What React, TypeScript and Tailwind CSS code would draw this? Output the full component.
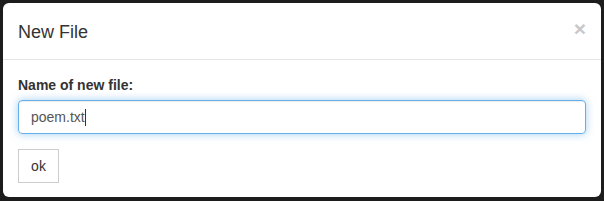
export default function App() {
  return (
    <div className="w-[604px] h-[201px] bg-[#1c1c1c] p-[3px] overflow-hidden" style={{ fontFamily: '"Liberation Sans", Arial, sans-serif' }}>
      <div className="w-[598px] h-[194px] bg-white rounded-[6px] flex flex-col text-[#333]">
        <div className="flex items-start justify-between px-[15px] pt-[16px] pb-[15px] border-b border-[#e5e5e5] h-[57px]">
          <h4 className="text-[18px] leading-[26px] text-[#333] m-0">New File</h4>
          <span className="text-[21px] font-bold leading-[21px] text-[#c8c8c8] -mt-[1px] mr-0">×</span>
        </div>
        <div className="px-[15px] pt-[15px]">
          <div className="text-[14px] font-bold leading-[20px] mb-[5px]">Name of new file:</div>
          <div className="h-[34px] w-full border border-[#66afe9] rounded-[4px] px-[12px] flex items-center text-[14px] text-[#555] shadow-[inset_0_1px_1px_rgba(0,0,0,0.075),0_0_8px_rgba(102,175,233,0.6)]">
            <span>poem.txt</span>
            <span className="inline-block w-px h-[17px] bg-[#333]"></span>
          </div>
          <div className="mt-[15px] w-[41px] h-[34px] border border-[#ccc] flex items-center justify-center text-[14px] text-[#333]">ok</div>
        </div>
      </div>
    </div>
  );
}
